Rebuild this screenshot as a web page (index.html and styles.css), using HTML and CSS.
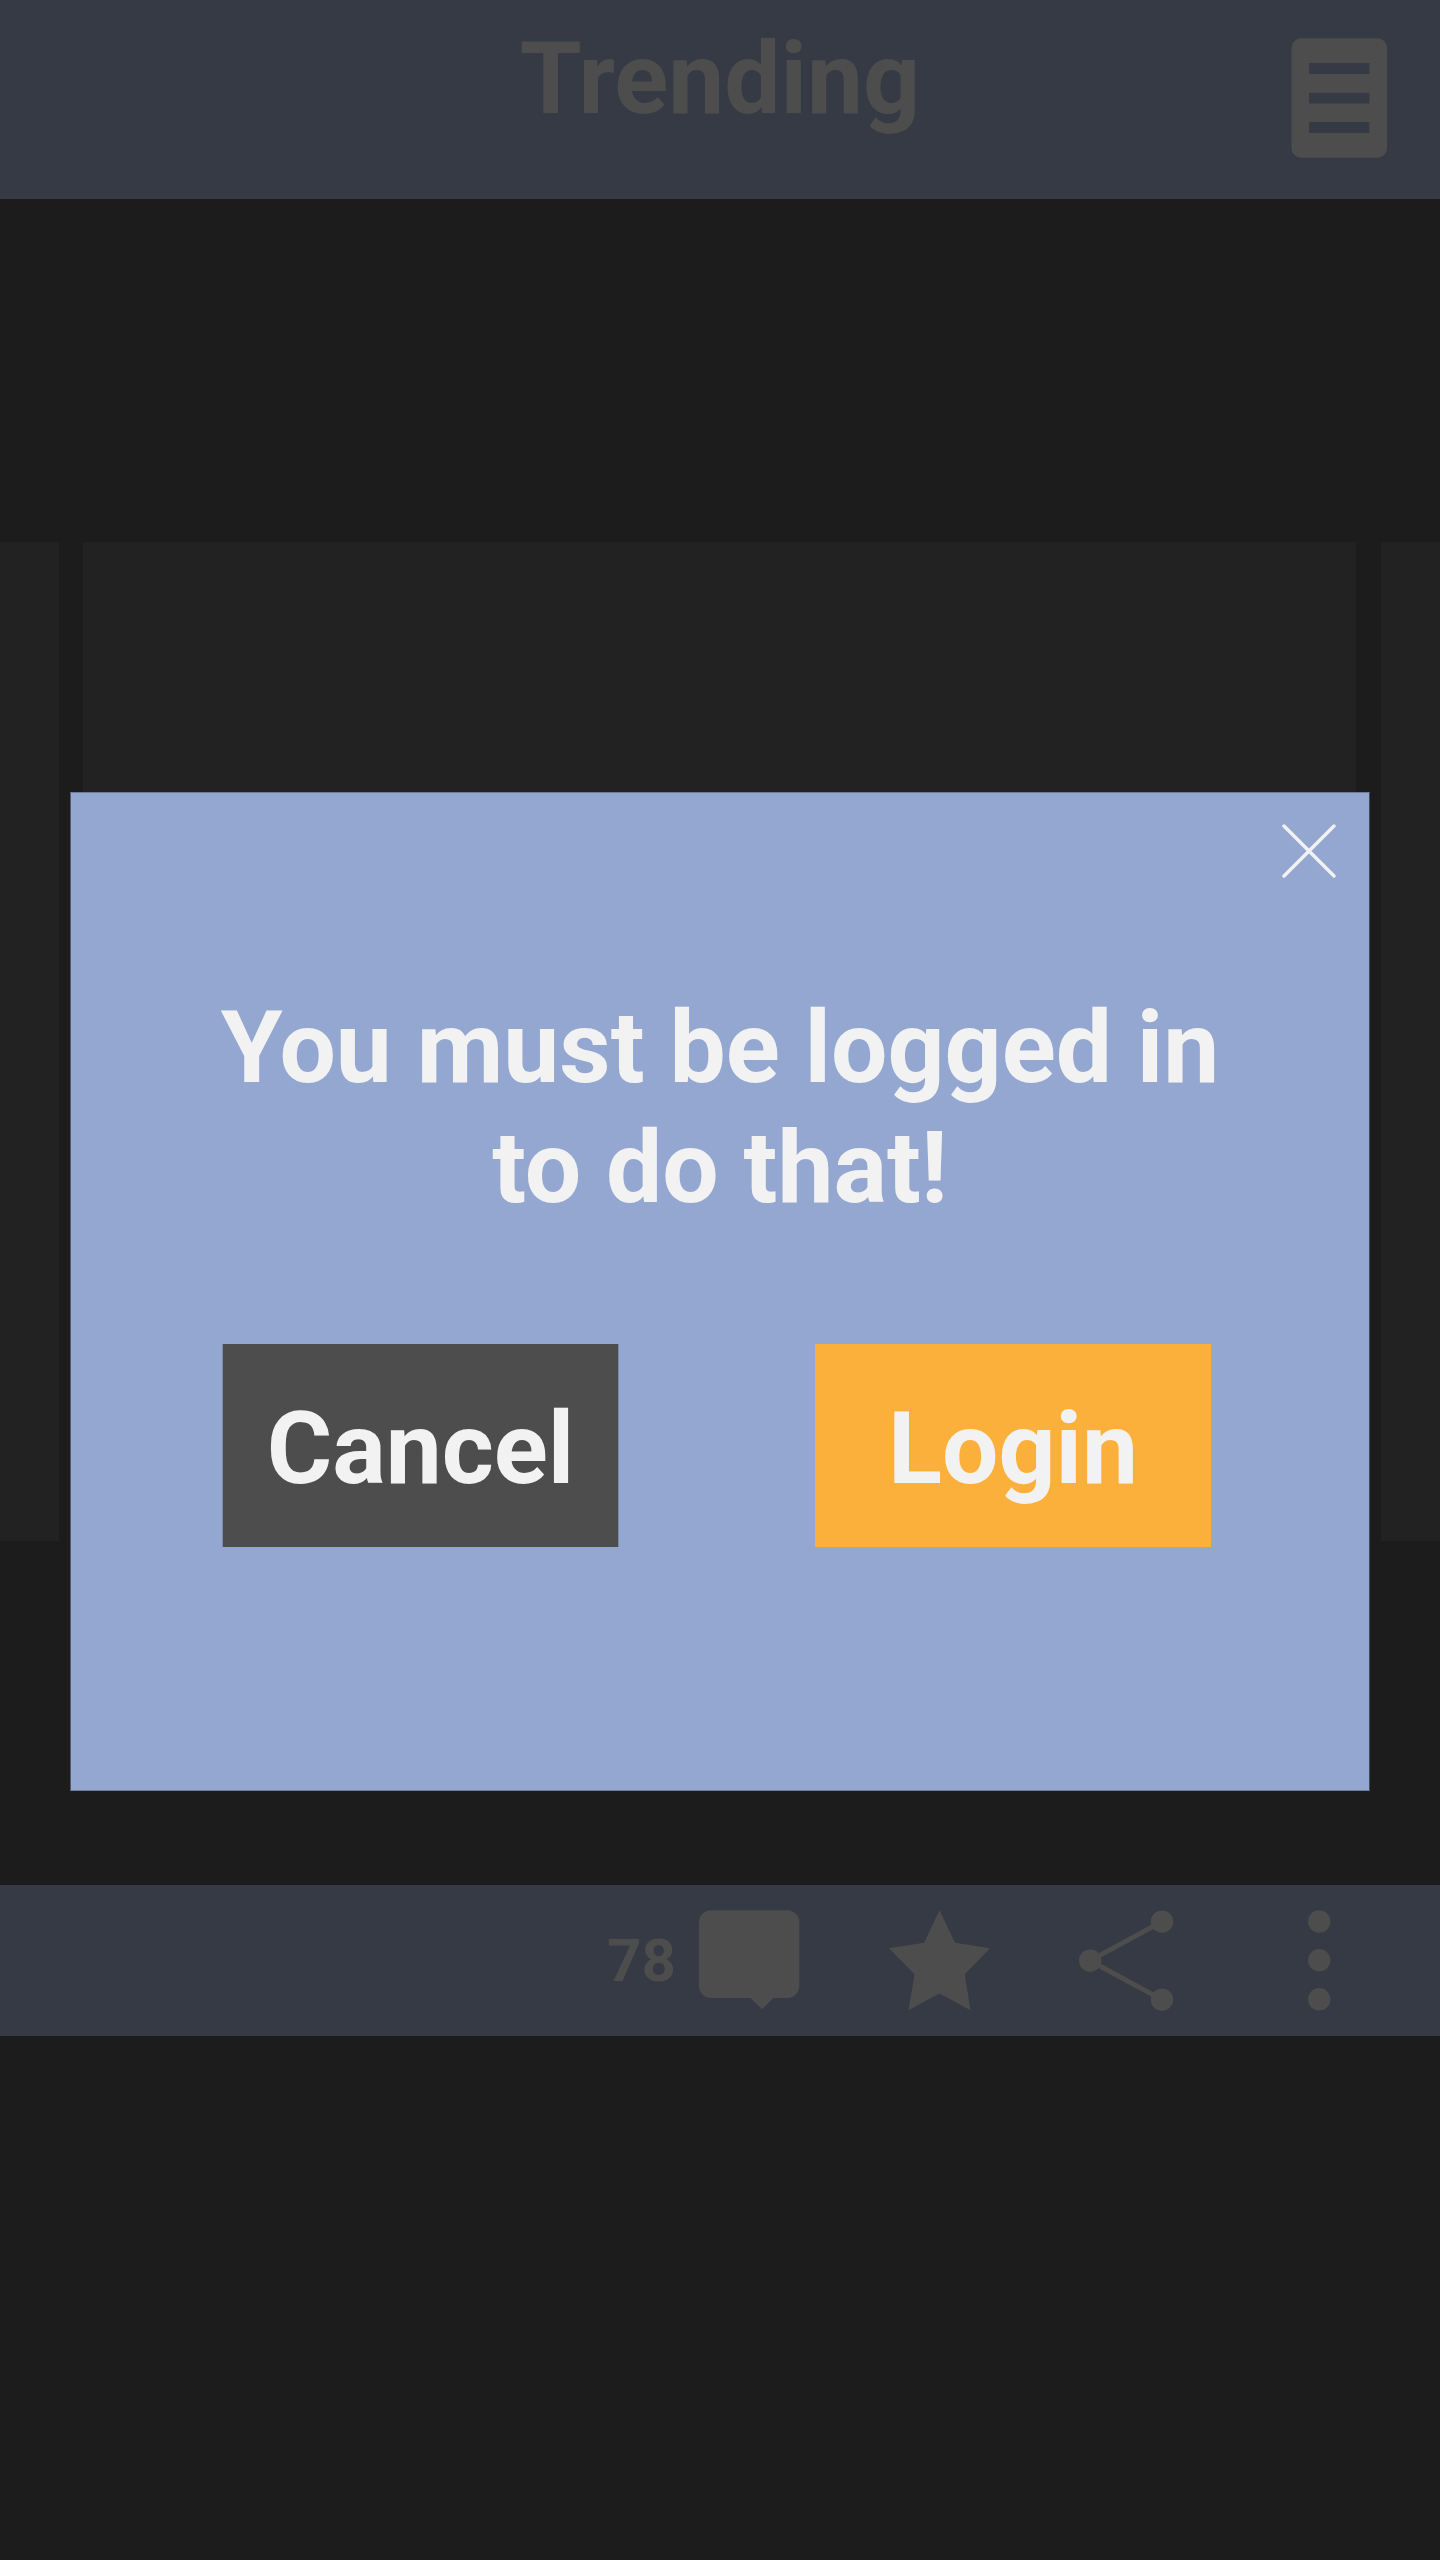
FILE: index.html
```html
<!DOCTYPE html>
<html lang="en">
<head>
<meta charset="utf-8">
<title>Trending</title>
<link rel="stylesheet" href="styles.css">
</head>
<body>
<div class="screen">
  <header class="topbar">
    <h1 class="title">Trending</h1>
    <svg class="menu" width="96" height="121" viewBox="0 0 96 121" aria-label="Menu">
      <path fill="currentColor" fill-rule="evenodd" d="M10.300 .2H86.300a9.800 9.800 0 0 1 9.700 9.800V110a9.800 9.800 0 0 1-9.700 9.800H10.300A9.800 9.800 0 0 1 .5 110V10A9.800 9.800 0 0 1 10.300 .2ZM18 25V36H78.400V25ZM18 54.700V65.500H78.400V54.700ZM18 84V95H78.400V84Z"/>
    </svg>
  </header>
  <main class="carousel">
    <div class="card card-side"></div>
    <div class="card card-main"></div>
    <div class="card card-side"></div>
  </main>
  <nav class="actions">
    <span class="count">78</span>
    <svg class="comment" width="101" height="100" viewBox="0 0 101 100" aria-label="Comments"><path fill="currentColor" d="M12 .2H88.300A12 12 0 0 1 100.300 12.200V76A12 12 0 0 1 88.300 88H74.500L63 99.300L51.500 88H12A12 12 0 0 1 0 76V12.200A12 12 0 0 1 12 .2Z"/></svg>
    <svg class="star" width="102" height="101" viewBox="0 0 102 101" aria-label="Favourite"><path fill="currentColor" d="M50.500 .3L66 32.800L101 38.300L75.800 64.300L81.500 100.300L50.500 83.500L19.500 100.300L25.500 64.300L0 38.300L35 32.800Z"/></svg>
    <svg class="share" width="95" height="102" viewBox="0 0 95 102" aria-label="Share"><path d="M83 11.700L11 50.700L83 89.700" fill="none" stroke="currentColor" stroke-width="4.900"/><g fill="currentColor"><circle cx="83" cy="11.700" r="11.200"/><circle cx="11.200" cy="50.700" r="11.200"/><circle cx="83" cy="89.700" r="11.200"/></g></svg>
    <svg class="more" width="23" height="101" viewBox="0 0 23 101" fill="currentColor" aria-label="More"><circle cx="11.200" cy="11.500" r="11.200"/><circle cx="11.200" cy="50.300" r="11.200"/><circle cx="11.200" cy="89.300" r="11.200"/></svg>
  </nav>
</div>
<div class="overlay">
  <section class="modal" role="dialog">
    <svg class="close" width="54" height="54" viewBox="0 0 54 54" aria-label="Close"><path d="M2 2L52 52M52 2L2 52" stroke="currentColor" stroke-width="3.400" stroke-linecap="round"/></svg>
    <p class="message">You must be logged in<br>to do that!</p>
    <div class="buttons">
      <button class="button cancel">Cancel</button>
      <button class="button login">Login</button>
    </div>
  </section>
</div>
</body>
</html>
```
FILE: styles.css
```css
* { box-sizing: border-box; }

body {
  margin: 0;
  background: #1c1c1c;
  font-family: Roboto, "Liberation Sans", sans-serif;
  font-weight: 700;
}

.screen {
  display: flex;
  flex-direction: column;
  width: 1440px;
  height: 2560px;
  overflow: hidden;
  color: #4d4d4d;
}

svg { display: block; flex: none; }

.topbar {
  display: grid;
  grid-template-columns: 1fr auto 1fr;
  align-items: start;
  height: 199px;
  padding: 19px 53px 0;
  background: #353a44;
}

.title {
  grid-column: 2;
  margin: 0;
  font-size: 100px;
  line-height: 120px;
}

.menu { justify-self: end; margin-top: 19px; }

.carousel {
  display: grid;
  grid-template-columns: 59px 1273px 59px;
  column-gap: 24.5px;
  height: 999px;
  margin-top: 343px;
}

.card { background: #222; }
.card-main { margin: 0 1px 0 -0.5px; }

.actions {
  display: flex;
  align-items: flex-start;
  height: 151px;
  margin-top: 344px;
  padding: 25px 90px 0 607px;
  background: #353a44;
}

.count {
  flex: none;
  width: 92px;
  margin-top: 16px;
  font-size: 60px;
  line-height: 70px;
}

.star { margin-left: 89px; }
.share { margin-left: 88px; }
.more { margin-left: 134px; }

.overlay {
  position: absolute;
  top: 0;
  left: 0;
  width: 1440px;
  height: 2560px;
  padding: 792px 70px 0;
}

.modal {
  display: flex;
  flex-direction: column;
  height: 999px;
  border: 1px solid;
  border-color: #6f7d9b #414958 #6f7d9b #51596b;
  background: #93a7d1;
  color: #f2f2f2;
}

.close { align-self: flex-end; margin: 31px 33px 0 0; }

.message {
  margin: 110px 0 0;
  font-size: 100px;
  line-height: 120px;
  text-align: center;
}

.buttons {
  display: flex;
  justify-content: space-between;
  margin: 116px 158px 0 151px;
}

.button {
  width: 396px;
  height: 203px;
  padding: 7px 0 0;
  border: 0;
  color: inherit;
  font: inherit;
  font-size: 100px;
  line-height: 120px;
}

.cancel {
  width: 397px;
  border: solid #7a8bad;
  border-width: 0 1px;
  background: #4d4d4d;
}

.login { background: #fbb03b; }
```
